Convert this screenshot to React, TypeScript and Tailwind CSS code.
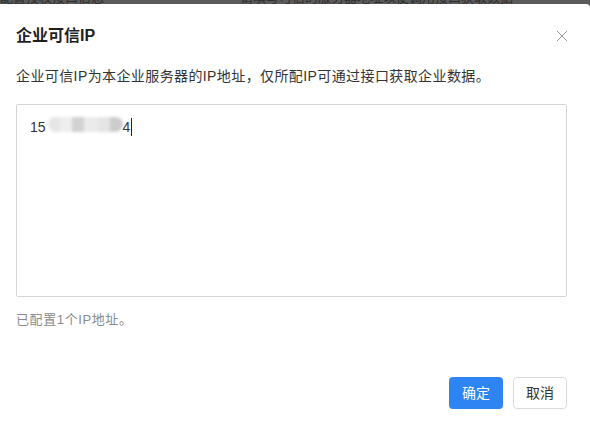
import React from "react";

const FONT = { fontFamily: '"Liberation Sans", "Noto Sans CJK SC", sans-serif' };

function CloseIcon() {
  return (
    <svg width="12" height="12" viewBox="0 0 12 12" fill="none">
      <path d="M1 1L11 11M11 1L1 11" stroke="#9a9a9a" strokeWidth="1" />
    </svg>
  );
}

// Masked IP digits in the middle of the address
function MaskedDigits() {
  return (
    <span className="inline-flex h-[16px] items-center blur-[1.5px]">
      <span className="h-[15px] w-[12px] rounded-l-full bg-[#e6e6e6]" />
      <span className="h-[15px] w-[12px] bg-[#eeeeee]" />
      <span className="h-[15px] w-[12px] bg-[#d2d2d2]" />
      <span className="h-[15px] w-[14px] bg-[#ebebeb]" />
      <span className="h-[15px] w-[12px] bg-[#e4e4e4]" />
      <span className="h-[15px] w-[13px] rounded-r-full bg-[#cccccc]" />
    </span>
  );
}

export default function App() {
  return (
    <div className="h-[427px] w-[590px] overflow-hidden bg-[#5a5a5a]" style={FONT}>
      {/* page behind the mask, only its bottom edge shows */}
      <div className="relative h-[4px] overflow-hidden">
        <div className="absolute left-0 top-[-9px] flex w-full text-[13px] leading-[13px] text-[#2e2e2e]">
          <span className="w-[240px]">配置授权接口信息</span>
          <span>请填写可信的服务器地址以便调用接口获取数据</span>
        </div>
      </div>

      {/* dialog */}
      <div className="h-[423px] rounded-tr-[4px] bg-white pl-[16px] pr-[23px] pt-[20px]">
        <div className="flex h-[24px] items-center justify-between">
          <div className="text-[16px] font-bold leading-[24px] text-[#1f1f1f]">企业可信IP</div>
          <div className="mr-[-1px] flex h-[12px] w-[12px] items-center justify-center">
            <CloseIcon />
          </div>
        </div>

        <p className="mt-[17px] text-[14px] leading-[22px] tracking-[0.4px] text-[#333333]">
          企业可信IP为本企业服务器的IP地址，仅所配IP可通过接口获取企业数据。
        </p>

        <div className="mt-[17px] h-[193px] rounded-[2px] border border-[#d4d4d4] pl-[13px] pt-[11px]">
          <div className="flex h-[22px] items-center text-[14px] leading-[22px] text-[#333333]">
            <span>15</span>
            <span className="ml-[2px]">
              <MaskedDigits />
            </span>
            <span>4</span>
            <span className="ml-[1px] h-[18px] w-[1px] bg-[#222]" />
          </div>
        </div>

        <p className="mt-[13px] text-[13px] leading-[20px] tracking-[0.6px] text-[#8a8a8a]">已配置1个IP地址。</p>

        <div className="mt-[47px] flex justify-end gap-[10px]">
          <button className="h-[32px] w-[54px] rounded-[4px] bg-[#2d84f2] text-[14px] text-white">
            确定
          </button>
          <button className="h-[32px] w-[54px] rounded-[4px] border border-[#d9d9d9] bg-white text-[14px] text-[#333333]">
            取消
          </button>
        </div>
      </div>
    </div>
  );
}
